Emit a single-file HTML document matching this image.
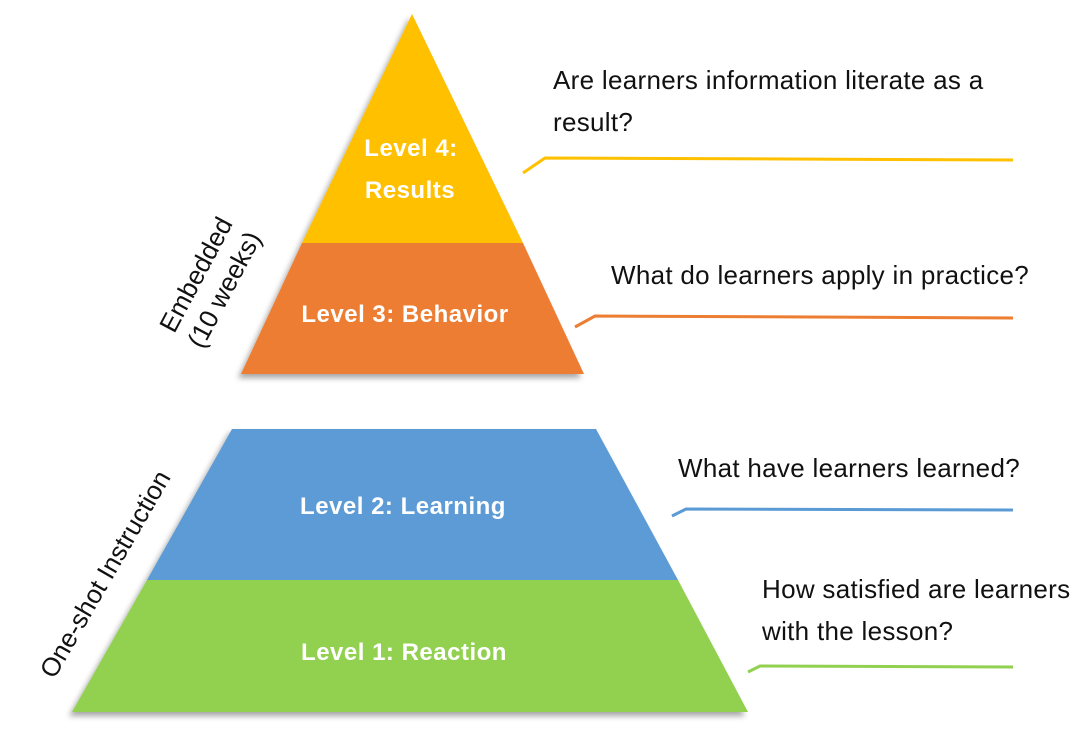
<!DOCTYPE html>
<html><head><meta charset="utf-8"><style>
body{margin:0;width:1077px;height:733px;background:#fff;overflow:hidden;position:relative;font-family:"Liberation Sans",sans-serif}
.t{position:absolute;font-size:26px;letter-spacing:0.3px;color:#111;line-height:42px;white-space:nowrap}
.r{position:absolute;font-size:26px;color:#111;white-space:nowrap;text-align:center;line-height:32px}
</style></head><body>
<svg width="1077" height="733" style="position:absolute;left:0;top:0">
<defs><filter id="s" x="-10%" y="-10%" width="120%" height="130%"><feDropShadow dx="-3" dy="4" stdDeviation="3" flood-color="#000" flood-opacity="0.35"/></filter></defs>
<g filter="url(#s)">
<polygon points="412,14 523,243 302,243" fill="#ffc000"/>
<polygon points="302,243 523,243 584,374 241,374" fill="#ed7d31"/>
<polygon points="232,429 596,429 678,580 147,580" fill="#5b9bd5"/>
<polygon points="147,580 678,580 748,712 72,712" fill="#92d050"/>
</g>
<g fill="none" stroke-width="3">
<polyline points="523,173 545,158 1013,160" stroke="#ffc000"/>
<polyline points="575,327 595,316 1013,318" stroke="#ed7d31"/>
<polyline points="672,516 686,509 1013,510" stroke="#5b9bd5"/>
<polyline points="748,672 760,666 1013,667" stroke="#92d050"/>
</g>
<g fill="#fff" font-family="Liberation Sans,sans-serif" font-weight="bold" font-size="24" letter-spacing="0.5" text-anchor="middle">
<text x="411" y="156">Level 4:</text>
<text x="410" y="198">Results</text>
<text x="405" y="322">Level 3: Behavior</text>
<text x="403" y="514">Level 2: Learning</text>
<text x="404" y="660">Level 1: Reaction</text>
</g>
</svg>
<div class="t" style="left:553px;top:59px">Are learners information literate as a<br>result?</div>
<div class="t" style="left:611px;top:254px">What do learners apply in practice?</div>
<div class="t" style="left:678px;top:447px">What have learners learned?</div>
<div class="t" style="left:762px;top:568px">How satisfied are learners<br>with the lesson?</div>
<div class="r" style="left:-30px;top:558px;width:270px;transform:rotate(-60deg)">One-shot Instruction</div>
<div class="r" style="left:130px;top:250px;width:160px;transform:rotate(-62deg)">Embedded<br>(10 weeks)</div>
</body></html>
